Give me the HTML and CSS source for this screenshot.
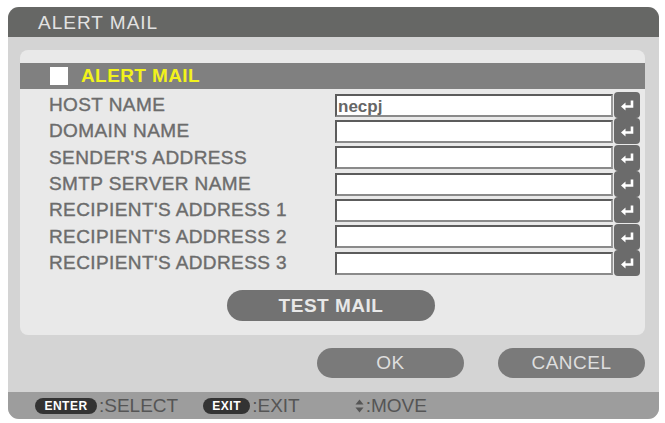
FILE: index.html
```html
<!DOCTYPE html>
<html lang="en">
<head>
    <meta charset="UTF-8">
    <meta name="viewport" content="width=device-width, initial-scale=1.0">
    <title>Alert Mail</title>
    <link rel="stylesheet" href="styles.css">
</head>
<body>
    <div class="window">
        <div class="titlebar">ALERT MAIL</div>

        <div class="content">
            <div class="panel">
                <div class="band">
                    <span class="checkbox"></span>
                    <span class="bandTitle">ALERT MAIL</span>
                </div>

                <div class="rows">
                    <div class="row">
                        <span class="label">HOST NAME</span>
                        <span class="field">necpj</span>
                        <span class="enterBtn"><svg width="26" height="26" viewBox="0 0 26 26"><path d="M18 8.5 V14.5 H11" fill="none" stroke="#fff" stroke-width="2.6"/><polygon points="7,14.5 11.5,10.5 11.5,18.5" fill="#fff"/></svg></span>
                    </div>
                    <div class="row">
                        <span class="label">DOMAIN NAME</span>
                        <span class="field"></span>
                        <span class="enterBtn"><svg width="26" height="26" viewBox="0 0 26 26"><path d="M18 8.5 V14.5 H11" fill="none" stroke="#fff" stroke-width="2.6"/><polygon points="7,14.5 11.5,10.5 11.5,18.5" fill="#fff"/></svg></span>
                    </div>
                    <div class="row">
                        <span class="label">SENDER'S ADDRESS</span>
                        <span class="field"></span>
                        <span class="enterBtn"><svg width="26" height="26" viewBox="0 0 26 26"><path d="M18 8.5 V14.5 H11" fill="none" stroke="#fff" stroke-width="2.6"/><polygon points="7,14.5 11.5,10.5 11.5,18.5" fill="#fff"/></svg></span>
                    </div>
                    <div class="row">
                        <span class="label">SMTP SERVER NAME</span>
                        <span class="field"></span>
                        <span class="enterBtn"><svg width="26" height="26" viewBox="0 0 26 26"><path d="M18 8.5 V14.5 H11" fill="none" stroke="#fff" stroke-width="2.6"/><polygon points="7,14.5 11.5,10.5 11.5,18.5" fill="#fff"/></svg></span>
                    </div>
                    <div class="row">
                        <span class="label">RECIPIENT'S ADDRESS 1</span>
                        <span class="field"></span>
                        <span class="enterBtn"><svg width="26" height="26" viewBox="0 0 26 26"><path d="M18 8.5 V14.5 H11" fill="none" stroke="#fff" stroke-width="2.6"/><polygon points="7,14.5 11.5,10.5 11.5,18.5" fill="#fff"/></svg></span>
                    </div>
                    <div class="row">
                        <span class="label">RECIPIENT'S ADDRESS 2</span>
                        <span class="field"></span>
                        <span class="enterBtn"><svg width="26" height="26" viewBox="0 0 26 26"><path d="M18 8.5 V14.5 H11" fill="none" stroke="#fff" stroke-width="2.6"/><polygon points="7,14.5 11.5,10.5 11.5,18.5" fill="#fff"/></svg></span>
                    </div>
                    <div class="row">
                        <span class="label">RECIPIENT'S ADDRESS 3</span>
                        <span class="field"></span>
                        <span class="enterBtn"><svg width="26" height="26" viewBox="0 0 26 26"><path d="M18 8.5 V14.5 H11" fill="none" stroke="#fff" stroke-width="2.6"/><polygon points="7,14.5 11.5,10.5 11.5,18.5" fill="#fff"/></svg></span>
                    </div>
                </div>

                <div class="testRow">
                    <span class="pill testBtn">TEST MAIL</span>
                </div>
            </div>
        </div>

        <div class="buttons">
            <span class="pill okBtn">OK</span>
            <span class="pill cancelBtn">CANCEL</span>
        </div>

        <div class="footer">
            <span class="badge enterBadge">ENTER</span>
            <span class="hint">:SELECT</span>
            <span class="badge exitBadge">EXIT</span>
            <span class="hint">:EXIT</span>
            <span class="moveIcon"><svg width="9" height="14" viewBox="0 0 9 14"><polygon points="4.5,0.5 8.5,5.5 0.5,5.5" fill="#555"/><polygon points="4.5,13.5 8.5,8.5 0.5,8.5" fill="#555"/></svg></span>
            <span class="hint">:MOVE</span>
        </div>
    </div>
</body>
</html>
```

FILE: styles.css
```css
body {
    margin: 0;
    background-color: #fff;
    font-family: "Liberation Sans", Arial, sans-serif;
}

.window {
    margin: 7px 0 0 8px;
    width: 651px;
    height: 412px;
    border-radius: 11px;
    overflow: hidden;
    background-color: #d4d4d4;
    display: flex;
    flex-direction: column;
}

.titlebar {
    height: 30px;
    line-height: 31px;
    padding-left: 30px;
    background-color: #666765;
    color: #e2e2e2;
    font-size: 19px;
    letter-spacing: 1px;
}

.content {
    padding: 13px 14px 0 12px;
}

.panel {
    height: 272px;
    padding-top: 13px;
    background-color: #e9e9e9;
    border-radius: 8px;
}

.band {
    height: 26px;
    background-color: #808080;
    display: flex;
    align-items: center;
    padding-left: 30px;
}

.checkbox {
    width: 18px;
    height: 18px;
    background-color: #fff;
}

.bandTitle {
    margin-left: 13px;
    color: #f2f21c;
    font-size: 19px;
    font-weight: bold;
    letter-spacing: 0.4px;
}

.rows {
    margin-top: 3px;
    display: grid;
    grid-auto-rows: 26.33px;
}

.row {
    display: flex;
    align-items: center;
    padding-left: 29px;
}

.label {
    width: 286px;
    color: #6c6c6c;
    font-size: 19px;
    letter-spacing: 0.4px;
    -webkit-text-stroke: 0.4px #6c6c6c;
}

.field {
    width: 273px;
    height: 19px;
    background-color: #fff;
    border: 2px solid #5c5c5c;
    border-right-color: #9a9a9a;
    border-bottom-color: #8a8a8a;
    color: #666;
    font-size: 17px;
    font-weight: bold;
    line-height: 21px;
    padding-left: 1px;
}

.enterBtn {
    width: 26px;
    height: 26px;
    margin-left: 1px;
    background-color: #6b6b6b;
    border-radius: 4px;
    display: flex;
}

.testRow {
    margin-top: 14px;
    display: flex;
    justify-content: center;
    padding-right: 3px;
}

.pill {
    display: flex;
    align-items: center;
    justify-content: center;
    border-radius: 16px;
    color: #e8e8e8;
    font-size: 19px;
}

.testBtn {
    width: 208px;
    height: 31px;
    background-color: #727272;
    font-weight: bold;
    letter-spacing: 0.5px;
}

.buttons {
    margin-top: 13px;
    display: flex;
    justify-content: flex-end;
    gap: 34px;
    padding-right: 14px;
}

.okBtn, .cancelBtn {
    width: 147px;
    height: 30px;
    background-color: #7a7a7a;
    color: #dedede;
    letter-spacing: 0.5px;
}

.footer {
    margin-top: auto;
    height: 27px;
    background-color: #9d9d9d;
    display: flex;
    align-items: center;
    padding-left: 27px;
}

.badge {
    height: 16px;
    border-radius: 8px;
    background-color: #333;
    color: #fff;
    font-size: 12px;
    font-weight: bold;
    letter-spacing: 0.5px;
    display: flex;
    align-items: center;
    justify-content: center;
}

.enterBadge {
    width: 62px;
}

.exitBadge {
    width: 47px;
    margin-left: 25px;
}

.hint {
    margin-left: 2px;
    color: #555;
    font-size: 19px;
}

.moveIcon {
    margin-left: 55px;
    display: flex;
}
```
